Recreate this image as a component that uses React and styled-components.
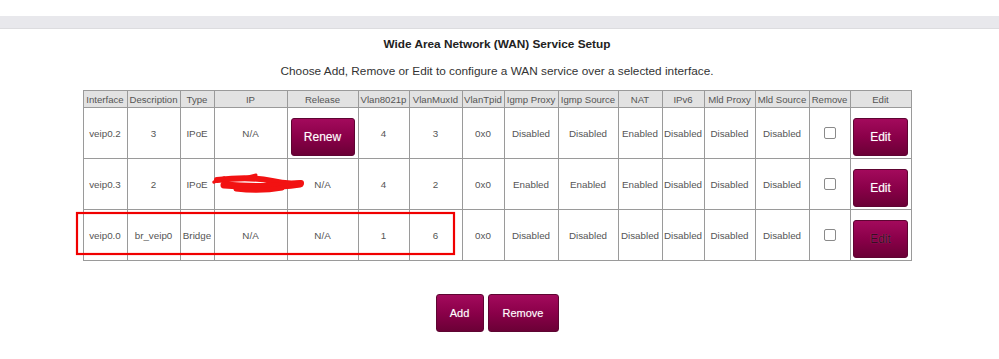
import React from 'react';
import styled, { createGlobalStyle } from 'styled-components';

const GlobalStyle = createGlobalStyle`
  body {
    margin: 0;
    background: #ffffff;
    font-family: "Liberation Sans", Arial, sans-serif;
  }
`;

const Page = styled.div`
  position: relative;
  width: 994px;
  height: 359px;
  padding-top: 16px;
  box-sizing: border-box;
`;

const TopBand = styled.div`
  position: absolute;
  left: 0;
  top: 16px;
  width: 999px;
  height: 12px;
  background: #e8e8ec;
  border-bottom: 1px solid #dcdcdf;
`;

const Content = styled.div`
  padding-top: 21px;
`;

const Title = styled.div`
  font-size: 11.8px;
  font-weight: bold;
  color: #222;
  text-align: center;
  line-height: 14px;
`;

const Subtitle = styled.div`
  margin-top: 13px;
  font-size: 11.8px;
  color: #333;
  text-align: center;
  line-height: 15px;
`;

const Table = styled.table`
  margin: 11px auto 0;
  width: 828px;
  table-layout: fixed;
  border-collapse: collapse;
  border: 1.5px solid #8f8f8f;
`;

const Th = styled.th`
  height: 16px;
  padding: 0;
  background: #e2e2e2;
  border: 1px solid #9a9a9a;
  font-size: 9.6px;
  font-weight: normal;
  color: #555;
  white-space: nowrap;
  overflow: hidden;
  text-align: center;
`;

const Td = styled.td`
  height: 50px;
  padding: 0;
  border: 1px solid #9a9a9a;
  font-size: 9.8px;
  color: #555;
  white-space: nowrap;
  text-align: center;
  vertical-align: middle;
`;

const Button = styled.button`
  height: 38px;
  width: ${(p) => p.$w}px;
  padding: 0;
  margin-top: ${(p) => (p.$inCell ? '7px' : '0')};
  border: 1px solid #5e0532;
  border-radius: 3px;
  background: linear-gradient(to bottom, #a30a5c 0%, #8a0049 50%, #6b0036 100%);
  color: ${(p) => (p.$dim ? '#3a0c22' : '#ffffff')};
  font-family: "Liberation Sans", Arial, sans-serif;
  font-size: ${(p) => p.$fs || 11}px;
  text-shadow: ${(p) => (p.$dim ? '0 0 1px rgba(255,255,255,0.35)' : '0 0 1px rgba(255,255,255,0.4)')};
  cursor: pointer;
`;

const CheckBox = styled.span`
  display: inline-block;
  width: 10px;
  height: 10px;
  border: 1px solid #8a8a8a;
  border-radius: 2px;
  background: #fff;
  vertical-align: middle;
`;

const ButtonRow = styled.div`
  display: flex;
  justify-content: center;
  gap: 4px;
  margin-top: 33px;
`;

const Overlay = styled.svg`
  position: absolute;
  left: 0;
  top: 0;
  pointer-events: none;
`;

const widths = [44, 53, 34, 73, 71, 51, 53, 42, 54, 60, 44, 42, 51, 54, 41, 61];
const headers = [
  'Interface', 'Description', 'Type', 'IP', 'Release', 'Vlan8021p', 'VlanMuxId',
  'VlanTpid', 'Igmp Proxy', 'Igmp Source', 'NAT', 'IPv6', 'Mld Proxy', 'Mld Source',
  'Remove', 'Edit',
];

const rows = [
  { iface: 'veip0.2', desc: '3', type: 'IPoE', ip: 'N/A', release: 'renew', p: '4', mux: '3', igp: 'Disabled', igs: 'Disabled', nat: 'Enabled' },
  { iface: 'veip0.3', desc: '2', type: 'IPoE', ip: '', release: 'N/A', p: '4', mux: '2', igp: 'Enabled', igs: 'Enabled', nat: 'Enabled' },
  { iface: 'veip0.0', desc: 'br_veip0', type: 'Bridge', ip: 'N/A', release: 'N/A', p: '1', mux: '6', igp: 'Disabled', igs: 'Disabled', nat: 'Disabled', dim: true },
];

export default function App() {
  return (
    <>
      <GlobalStyle />
      <Page>
        <TopBand />
        <Content>
          <Title>Wide Area Network (WAN) Service Setup</Title>
          <Subtitle>Choose Add, Remove or Edit to configure a WAN service over a selected interface.</Subtitle>
          <Table>
            <colgroup>
              {widths.map((w, i) => (
                <col key={i} style={{ width: w }} />
              ))}
            </colgroup>
            <thead>
              <tr>
                {headers.map((h) => (
                  <Th key={h}>{h}</Th>
                ))}
              </tr>
            </thead>
            <tbody>
              {rows.map((r) => (
                <tr key={r.iface}>
                  <Td>{r.iface}</Td>
                  <Td>{r.desc}</Td>
                  <Td>{r.type}</Td>
                  <Td>{r.ip}</Td>
                  <Td>
                    {r.release === 'renew' ? (
                      <Button $w={64} $fs={12} $inCell>Renew</Button>
                    ) : (
                      r.release
                    )}
                  </Td>
                  <Td>{r.p}</Td>
                  <Td>{r.mux}</Td>
                  <Td>0x0</Td>
                  <Td>{r.igp}</Td>
                  <Td>{r.igs}</Td>
                  <Td>{r.nat}</Td>
                  <Td>Disabled</Td>
                  <Td>Disabled</Td>
                  <Td>Disabled</Td>
                  <Td><CheckBox /></Td>
                  <Td>
                    <Button $w={55} $fs={12} $inCell $dim={r.dim}>Edit</Button>
                  </Td>
                </tr>
              ))}
            </tbody>
          </Table>
          <ButtonRow>
            <Button $w={48}>Add</Button>
            <Button $w={71}>Remove</Button>
          </ButtonRow>
        </Content>
        <Overlay width="999" height="359" viewBox="0 0 999 359">
          <rect x="77" y="213" width="377" height="41" fill="none" stroke="#f00000" strokeWidth="2.2" />
          <g stroke="#f21212" fill="none" strokeLinecap="round">
            <path d="M217 180 C235 178, 255 177, 272 181 S294 183, 301 183" strokeWidth="6" />
            <path d="M224 185 C248 187, 272 188, 300 184" strokeWidth="7" />
            <path d="M236 189 C252 191, 266 191, 282 188" strokeWidth="5" />
            <path d="M214 182 L224 178" strokeWidth="3.5" />
            <path d="M244 178 L256 175" strokeWidth="3" />
          </g>
        </Overlay>
      </Page>
    </>
  );
}
